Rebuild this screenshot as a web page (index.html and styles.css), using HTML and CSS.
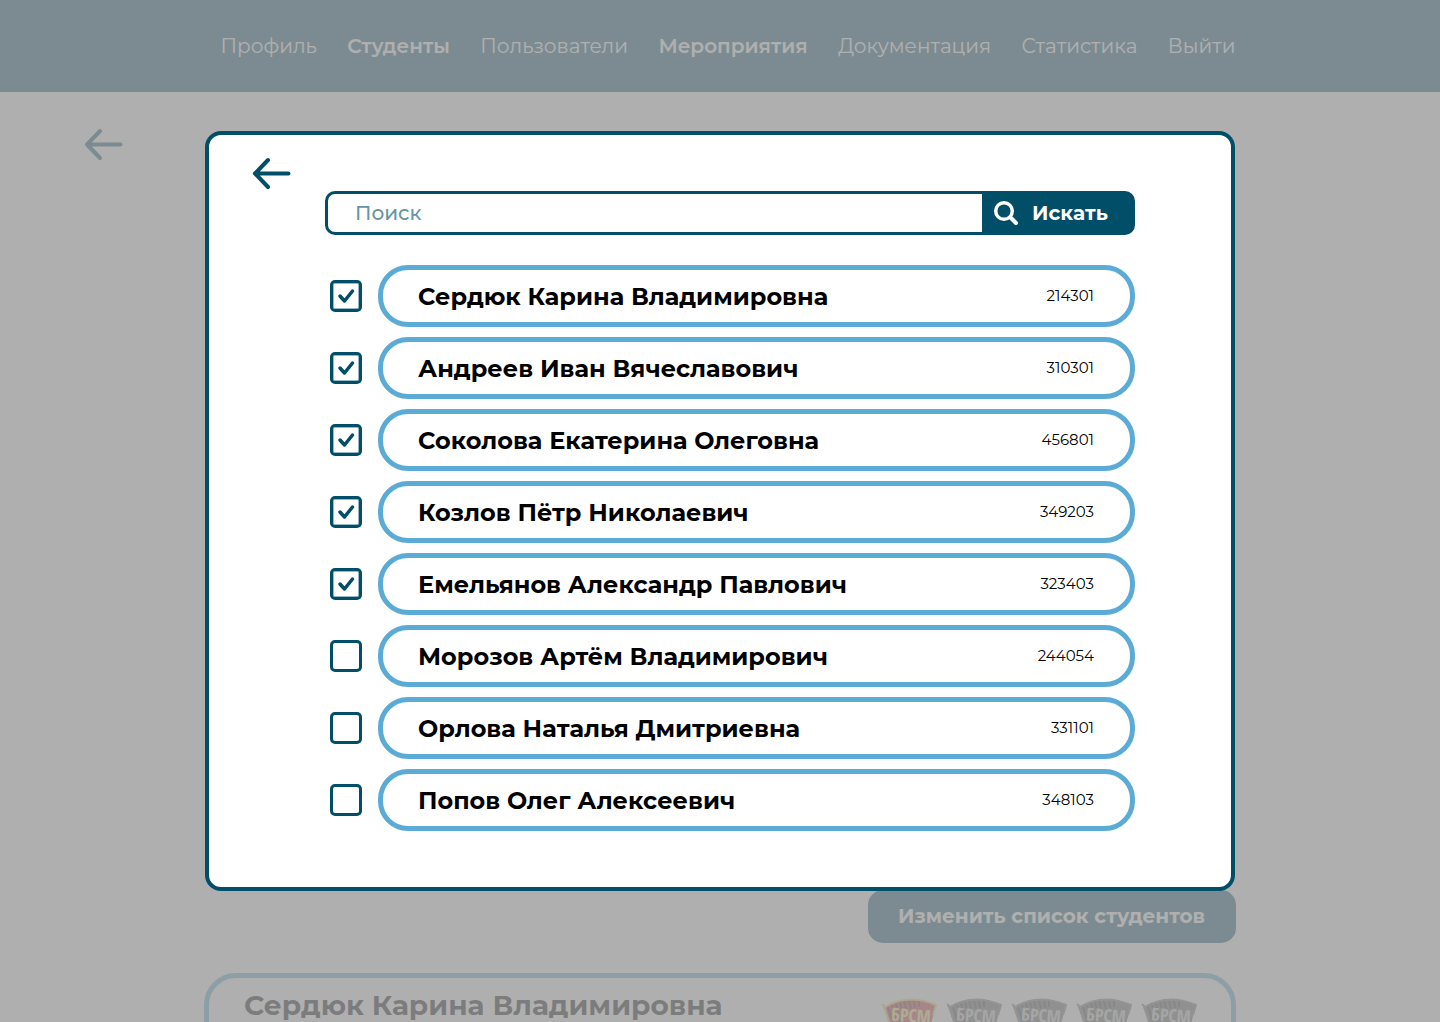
FILE: index.html
```html
<!DOCTYPE html>
<html lang="ru">
<head>
<meta charset="utf-8">
<meta name="viewport" content="width=device-width, initial-scale=1">
<title>Студенты</title>
<link rel="stylesheet" href="styles.css">
</head>
<body>
<svg class="defs" aria-hidden="true">
  <symbol id="arrow" viewBox="0 0 40 34">
    <path d="M4 17.500H37.500M4 17.500L17 4M4 17.500L17 31" fill="none" stroke="currentColor" stroke-width="4" stroke-linecap="round" stroke-linejoin="round"/>
  </symbol>
  <symbol id="flag" viewBox="0 0 56 52">
    <path d="M1 7L4 10Q27 -4 55 8L45 46Q30 36 16 48Z" fill="var(--cloth)"/>
    <path d="M7 10L18 45M11 8L20 40M15 6L22 36M19 5L23 20M23 4L26 16M28 4L30 12M33 4L34 11M38 4L38 10" stroke="#222" stroke-opacity=".6" stroke-width="2" fill="none"/>
    <path d="M1 7L4 10Q27 -4 55 8L52 18M3 9L16 50" fill="none" stroke="var(--trim)" stroke-width="2"/>
    <text x="10" y="25" class="flag-text" transform="rotate(4 30 20)">БРСМ</text>
  </symbol>
</svg>

<div class="page">
  <header class="top">
    <nav class="menu">
      <a href="#">Профиль</a>
      <a href="#" class="active">Студенты</a>
      <a href="#">Пользователи</a>
      <a href="#" class="active">Мероприятия</a>
      <a href="#">Документация</a>
      <a href="#">Статистика</a>
      <a href="#">Выйти</a>
    </nav>
  </header>
  <main class="content">
    <button class="back" aria-label="Назад"><svg><use href="#arrow"/></svg></button>
    <section class="students">
      <button class="edit">Изменить список студентов</button>
      <article class="card">
        <h2>Сердюк Карина Владимировна</h2>
        <div class="flags">
          <svg class="flag red"><use href="#flag"/></svg>
          <svg class="flag"><use href="#flag"/></svg>
          <svg class="flag"><use href="#flag"/></svg>
          <svg class="flag"><use href="#flag"/></svg>
          <svg class="flag"><use href="#flag"/></svg>
        </div>
      </article>
    </section>
  </main>
</div>

<div class="overlay">
  <div class="modal" role="dialog" aria-label="Список студентов">
    <button class="back" aria-label="Закрыть"><svg><use href="#arrow"/></svg></button>
    <form class="picker">
      <div class="search">
        <input type="search" placeholder="Поиск" aria-label="Поиск">
        <button type="button">
          <svg viewBox="0 0 26 26"><circle cx="11" cy="11" r="8.3" stroke-width="3.5"/><path d="M18 18L23 23"/></svg>
          <span>Искать</span>
        </button>
      </div>
      <ul class="list">
        <li><label><input type="checkbox" checked><span class="pill"><b>Сердюк Карина Владимировна</b><span>214301</span></span></label></li>
        <li><label><input type="checkbox" checked><span class="pill"><b>Андреев Иван Вячеславович</b><span>310301</span></span></label></li>
        <li><label><input type="checkbox" checked><span class="pill"><b>Соколова Екатерина Олеговна</b><span>456801</span></span></label></li>
        <li><label><input type="checkbox" checked><span class="pill"><b>Козлов Пётр Николаевич</b><span>349203</span></span></label></li>
        <li><label><input type="checkbox" checked><span class="pill"><b>Емельянов Александр Павлович</b><span>323403</span></span></label></li>
        <li><label><input type="checkbox"><span class="pill"><b>Морозов Артём Владимирович</b><span>244054</span></span></label></li>
        <li><label><input type="checkbox"><span class="pill"><b>Орлова Наталья Дмитриевна</b><span>331101</span></span></label></li>
        <li><label><input type="checkbox"><span class="pill"><b>Попов Олег Алексеевич</b><span>348103</span></span></label></li>
      </ul>
    </form>
  </div>
</div>
</body>
</html>
```
FILE: styles.css
```css
:root {
  --dark: #004e68;
  --blue: #5babd7;
}

* { box-sizing: border-box; }

body {
  margin: 0;
  background: #fff;
  color: #000;
  font-family: Montserrat, Inter, "Noto Sans", sans-serif;
  font-size: 20px;
}

button, input { font: inherit; }
button { border: 0; cursor: pointer; }
.defs { display: none; }

.back {
  display: block;
  width: 40px;
  height: 34px;
  padding: 0;
  background: none;
  color: var(--dark);
}
.back svg { display: block; width: 40px; height: 34px; }

/* Page behind the dialog */
.page {
  height: 100vh;
  overflow: hidden;
}
.top {
  padding-left: 16px;
  background: var(--dark);
}
.menu {
  display: flex;
  justify-content: space-between;
  align-items: center;
  max-width: 1015px;
  height: 92px;
  margin: 0 auto;
}
.menu a { color: #fff; font-weight: 400; text-decoration: none; }
.menu .active { font-weight: 600; }

.content {
  display: grid;
  grid-template-columns: 1fr minmax(0, 1032px) 1fr;
}
.content > .back { margin: 35px 0 0 83px; }
.students {
  display: flex;
  flex-direction: column;
  gap: 30px;
  padding-top: 798px;
}
.edit {
  align-self: flex-end;
  padding: 0 31px 2px 30px;
  height: 53px;
  border-radius: 15px;
  background: var(--dark);
  color: #fff;
  font-weight: 700;
}
.card {
  display: flex;
  justify-content: space-between;
  align-items: flex-start;
  padding: 10px 34px 24px 35px;
  border: 5px solid var(--blue);
  border-radius: 32px;
}
.card h2 { margin: 0; font-size: 28px; line-height: 34px; font-weight: 700; }
.flags { display: flex; gap: 9px; padding-top: 9px; }
.flag { --cloth: #666; --trim: #777; --ink: #ccc; width: 56px; height: 52px; }
.flag.red { --cloth: #d33640; --trim: #e4d850; --ink: #f2ee70; }
.flag-text {
  fill: var(--ink);
  font: 700 18px "Liberation Sans Narrow", "Open Sans Condensed", "Roboto Condensed", "Noto Sans", sans-serif;
}

/* Dialog */
.overlay {
  position: fixed;
  inset: 0;
  display: flex;
  justify-content: center;
  align-items: flex-start;
  padding-top: 131px;
  background: rgba(155, 155, 155, .8);
}
.modal {
  width: 100%;
  max-width: 1030px;
  padding: 21px 96px 56px 42px;
  border: 4px solid var(--dark);
  border-radius: 16px;
  background: #fff;
}
.picker { margin: 1px 0 0 74px; }

.search {
  display: flex;
  height: 44px;
  border: 3px solid var(--dark);
  border-radius: 10px;
  background: var(--dark);
}
.search input {
  flex: 1;
  min-width: 0;
  padding: 0 27px;
  border: 0;
  border-radius: 7px 0 0 7px;
  outline: 0;
  background: #fff;
  font-weight: 500;
}
.search input::placeholder { color: #6695a4; opacity: 1; }
.search button {
  display: flex;
  align-items: center;
  gap: 13px;
  width: 150px;
  padding: 0 11px;
  background: none;
  color: #fff;
  font-weight: 700;
}
.search svg {
  width: 26px;
  height: 26px;
  fill: none;
  stroke: #fff;
  stroke-width: 4;
  stroke-linecap: round;
}

.list {
  display: flex;
  flex-direction: column;
  gap: 10px;
  margin: 30px 0 0;
  padding: 0 0 0 5px;
  list-style: none;
}
.list label { display: flex; align-items: center; gap: 16px; }
.list input {
  appearance: none;
  flex: none;
  width: 32px;
  height: 32px;
  margin: 0;
  border: 3px solid var(--dark);
  border-radius: 5px;
}
.list input:checked {
  background: url("data:image/svg+xml,%3Csvg xmlns='http://www.w3.org/2000/svg' viewBox='0 0 26 26'%3E%3Cpath d='M7 13L11.5 18L19.500 8' fill='none' stroke='%23004e68' stroke-width='3.5' stroke-linecap='round' stroke-linejoin='round'/%3E%3C/svg%3E") center / 26px 26px no-repeat;
  box-shadow: inset 0 0 0 1px rgba(0, 78, 104, .4);
}
.pill {
  flex: 1;
  display: flex;
  justify-content: space-between;
  align-items: center;
  height: 62px;
  padding: 0 36px 0 35px;
  border: 5px solid var(--blue);
  border-radius: 30px;
}
.pill b { font-size: 24px; font-weight: 700; }
.pill span { font-size: 15px; line-height: 20px; }
```
